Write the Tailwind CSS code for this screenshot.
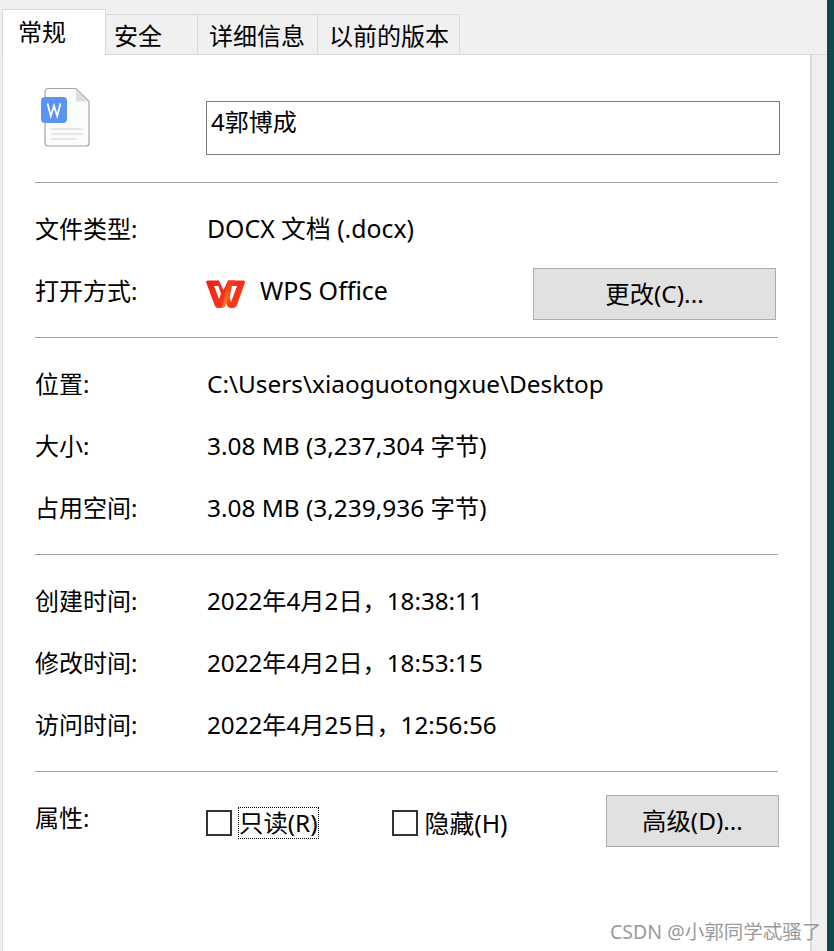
<!DOCTYPE html>
<html lang="zh-CN">
<head>
  <meta charset="UTF-8">
  <title>文件属性</title>
  <script src="https://cdn.jsdelivr.net/npm/@tailwindcss/browser@4"></script>
</head>
<body class="bg-[#f0f0f0]">
  <div class="relative flex h-[951px] w-[834px] overflow-hidden font-['Noto_Sans','Noto_Sans_CJK_SC',sans-serif] text-[24px] text-black">
    <div class="flex w-[827px] flex-col pl-[2px]">

      <!-- Tabs -->
      <div class="relative z-10 flex h-[55px] items-end">
        <div class="flex h-[46px] w-[104px] items-start border border-b-0 border-[#d9d9d9] bg-white pl-[15px] pt-[2px] leading-[40px]">常规</div>
        <div class="flex h-[41px] w-[92px] items-center border-t border-r border-b border-[#d9d9d9] pl-[8px] pt-[2px] leading-none">安全</div>
        <div class="flex h-[41px] w-[120px] items-center border-t border-r border-b border-[#d9d9d9] pl-[11px] pt-[2px] leading-none">详细信息</div>
        <div class="flex h-[41px] w-[142px] items-center border-t border-r border-b border-[#d9d9d9] pl-[11px] pt-[2px] leading-none">以前的版本</div>
        <div class="h-[41px] flex-1 border-b border-[#d9d9d9]"></div>
      </div>

      <!-- General page -->
      <div class="-mt-px flex w-[810px] flex-1 flex-col border-r-2 border-l border-[#dcdcdc] bg-white pl-[32px] pr-[31px]">
        <div class="flex h-[128px] items-start">
          <svg class="mt-[33px] ml-[5px] h-[60px] w-[50px] shrink-0" viewBox="0 0 50 60">
            <path d="M8 1.500H36L49 14.500V56a3 3 0 0 1-3 3H8a3 3 0 0 1-3-3V4.500a3 3 0 0 1 3-3Z" fill="#fbfbfb" stroke="#a3a3a3" stroke-width="1.200"/>
            <path d="M36 2V14.500H48.500Z" fill="#dedede"/>
            <rect x="1" y="10" width="26" height="26" rx="4" fill="#5b93f1"/>
            <path d="M7.500 16.500 10.800 29 14 19 17.200 29 20.500 16.500" fill="none" stroke="#fff" stroke-width="1.800"/>
            <path d="M11 42H43M11 47H43M11 52H36" stroke="#d2d2d2" stroke-width="1"/>
          </svg>
          <div class="mt-[47px] ml-[116px] h-[54px] w-[574px] shrink-0 border border-[#7a7a7a] pl-[4px] leading-[40px]">4郭博成</div>
        </div>
        <div class="h-px w-[743px] bg-[#a0a0a0]"></div>

        <div class="mt-[15px] flex h-[62px] items-center">
          <div class="w-[172px]">文件类型:</div>
          <div class="text-[24.8px]">DOCX 文档 (.docx)</div>
        </div>
        <div class="flex h-[62px] items-center">
          <div class="w-[171px]">打开方式:</div>
          <svg class="mt-[8px] h-[30px] w-[40px]" viewBox="0 0 40 30">
            <defs>
              <linearGradient id="wpsRed" x1="0" y1="0" x2="1" y2="1">
                <stop offset="0" stop-color="#f0201c"/>
                <stop offset="1" stop-color="#f8421c"/>
              </linearGradient>
              <linearGradient id="wpsOrange" x1="0" y1="0" x2="0" y2="1">
                <stop offset="0" stop-color="#f9351c"/>
                <stop offset="1" stop-color="#ff7f1e"/>
              </linearGradient>
            </defs>
            <path d="M0 2Q0 0.500 2 0.500H13L17.500 10 22 0.500H37Q39.500 0.500 39 2.500L31 25Q30 28 27 28H24Q22 28 21 25L19.500 20 18 25Q17 28 14 28H12Q9.500 28 8.500 25Z" fill="url(#wpsRed)"/>
            <path d="M22 0.500H29L20 25Q19 28 16 28Z" fill="url(#wpsOrange)"/>
            <path d="M8 6H12.500L15 14 13 19ZM26 6H31L25 22 23.500 18Z" fill="#fff"/>
          </svg>
          <div class="ml-[14px] flex-1 text-[25px]">WPS Office</div>
          <button class="mt-[6px] mr-[3px] h-[52px] w-[243px] border border-[#adadad] bg-[#e1e1e1] text-[24.4px] leading-none">更改(C)...</button>
        </div>
        <div class="mt-[15px] h-px w-[743px] bg-[#a0a0a0]"></div>

        <div class="mt-[15px] flex h-[62px] items-center">
          <div class="w-[172px]">位置:</div>
          <div class="text-[24.4px]">C:\Users\xiaoguotongxue\Desktop</div>
        </div>
        <div class="flex h-[62px] items-center">
          <div class="w-[172px]">大小:</div>
          <div class="text-[24.4px]">3.08 MB (3,237,304 字节)</div>
        </div>
        <div class="flex h-[62px] items-center">
          <div class="w-[172px]">占用空间:</div>
          <div class="text-[24.4px]">3.08 MB (3,239,936 字节)</div>
        </div>
        <div class="mt-[15px] h-px w-[743px] bg-[#a0a0a0]"></div>

        <div class="mt-[15px] flex h-[62px] items-center">
          <div class="w-[172px]">创建时间:</div>
          <div class="text-[24.2px]">2022年4月2日，18:38:11</div>
        </div>
        <div class="flex h-[62px] items-center">
          <div class="w-[172px]">修改时间:</div>
          <div class="text-[24.2px]">2022年4月2日，18:53:15</div>
        </div>
        <div class="flex h-[62px] items-center">
          <div class="w-[172px]">访问时间:</div>
          <div class="text-[24.2px]">2022年4月25日，12:56:56</div>
        </div>
        <div class="mt-[15px] h-px w-[743px] bg-[#a0a0a0]"></div>

        <div class="mt-[23px] flex h-[52px] items-center">
          <div class="-mt-[6px] w-[171px]">属性:</div>
          <div class="mt-[4px] flex items-center">
            <div class="h-[26px] w-[26px] border-2 border-[#333]"></div>
            <div class="ml-[6px] border border-dotted border-black text-[24.4px] leading-[30px]">只读(R)</div>
          </div>
          <div class="mt-[4px] ml-[73px] flex items-center">
            <div class="h-[26px] w-[26px] border-2 border-[#333]"></div>
            <div class="ml-[7px] text-[24.8px] leading-[30px]">隐藏(H)</div>
          </div>
          <button class="ml-auto h-[52px] w-[173px] border border-[#adadad] bg-[#e1e1e1] text-[24.4px] leading-none">高级(D)...</button>
        </div>
      </div>
    </div>
    <div class="w-[7px] bg-[#10494b]"></div>

    <!-- Watermark -->
    <div class="absolute top-[919px] left-[610px] text-[19.5px] leading-[26px] whitespace-nowrap text-[#9a9a9a]">CSDN @小郭同学忒骚了</div>
  </div>
</body>
</html>
